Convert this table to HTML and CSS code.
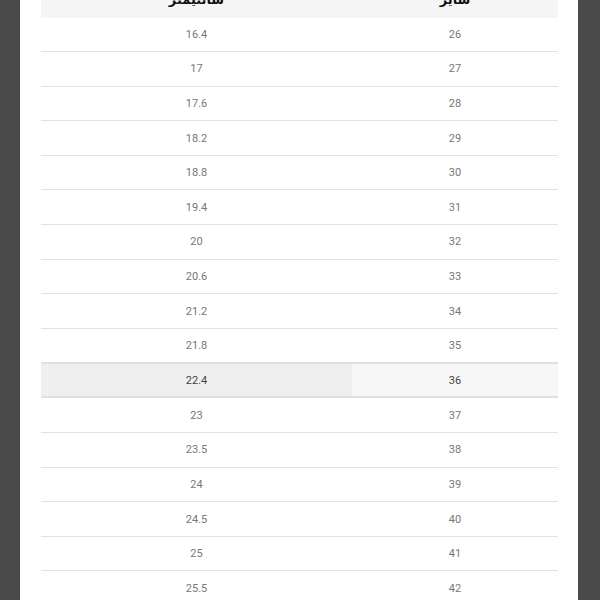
FILE: index.html
```html
<!DOCTYPE html>
<html lang="fa" dir="rtl">
<head>
<meta charset="utf-8">
<link rel="stylesheet" href="styles.css">
</head>
<body>
<div class="panel">
  <table class="sizes">
    <thead>
      <tr><th class="c-size">سایز</th><th class="c-cm">سانتیمتر</th></tr>
    </thead>
    <tbody>
      <tr><td class="c-size">26</td><td class="c-cm">16.4</td></tr>
      <tr><td class="c-size">27</td><td class="c-cm">17</td></tr>
      <tr><td class="c-size">28</td><td class="c-cm">17.6</td></tr>
      <tr><td class="c-size">29</td><td class="c-cm">18.2</td></tr>
      <tr><td class="c-size">30</td><td class="c-cm">18.8</td></tr>
      <tr><td class="c-size">31</td><td class="c-cm">19.4</td></tr>
      <tr><td class="c-size">32</td><td class="c-cm">20</td></tr>
      <tr><td class="c-size">33</td><td class="c-cm">20.6</td></tr>
      <tr><td class="c-size">34</td><td class="c-cm">21.2</td></tr>
      <tr><td class="c-size">35</td><td class="c-cm">21.8</td></tr>
      <tr class="active"><td class="c-size">36</td><td class="c-cm">22.4</td></tr>
      <tr><td class="c-size">37</td><td class="c-cm">23</td></tr>
      <tr><td class="c-size">38</td><td class="c-cm">23.5</td></tr>
      <tr><td class="c-size">39</td><td class="c-cm">24</td></tr>
      <tr><td class="c-size">40</td><td class="c-cm">24.5</td></tr>
      <tr><td class="c-size">41</td><td class="c-cm">25</td></tr>
      <tr><td class="c-size">42</td><td class="c-cm">25.5</td></tr>
      <tr><td class="c-size">43</td><td class="c-cm">26</td></tr>
    </tbody>
  </table>
</div>
</body>
</html>
```

FILE: styles.css
```css
html, body {
  margin: 0;
  padding: 0;
  height: 600px;
  overflow: hidden;
  background: #4a4a4a;
}
body {
  font-family: Roboto, "DejaVu Sans", sans-serif;
}
.panel {
  margin: 0 22px 0 20px;
  background: #ffffff;
  height: 600px;
  padding: 0 20px 0 21px;
  overflow: hidden;
}
.sizes {
  width: 517px;
  border-collapse: collapse;
  margin-top: -18px;
  direction: rtl;
}
.sizes th {
  height: 35.5px;
  padding: 0;
  background: #f5f5f5;
  color: #111;
  font-weight: 700;
  font-size: 13px;
  font-family: "DejaVu Sans", sans-serif;
  vertical-align: middle;
}
.sizes td {
  height: 33.6px;
  padding: 0;
  text-align: center;
  font-size: 11px;
  color: #777;
  border-bottom: 1px solid #e2e2e2;
}
.c-size { width: 206px; }
.c-cm { width: 311px; }
.sizes tr.active td {
  color: #444;
  border-top: 2px solid #e0e0e0;
  border-bottom: 2px solid #e0e0e0;
  height: 32px;
}
.sizes tr.active td.c-size { background: #f7f7f7; }
.sizes tr.active td.c-cm { background: #efefef; }
```
